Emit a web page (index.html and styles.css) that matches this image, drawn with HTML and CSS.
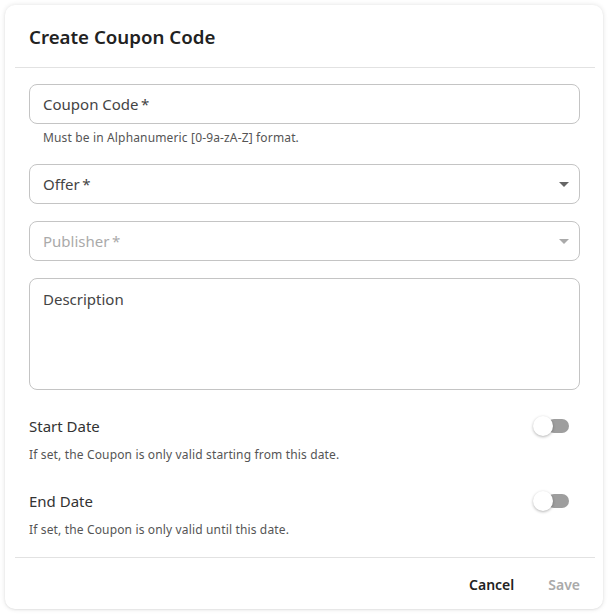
FILE: index.html
```html
<!DOCTYPE html>
<html>
<head>
<meta charset="utf-8">
<link rel="stylesheet" href="styles.css">
</head>
<body>
<div class="card">
  <div class="header"><h1 class="title">Create Coupon Code</h1></div>
  <div class="divider"></div>
  <div class="content">
    <div class="field"><span class="label">Coupon Code&thinsp;*</span></div>
    <div class="helper">Must be in Alphanumeric [0-9a-zA-Z] format.</div>
    <div class="field select"><span class="label">Offer&thinsp;*</span>
      <svg class="arrow" width="10" height="5" viewBox="0 0 10 5"><path d="M0 0h10L5 5z" fill="#666"/></svg>
    </div>
    <div class="field select disabled"><span class="label">Publisher&thinsp;*</span>
      <svg class="arrow" width="10" height="5" viewBox="0 0 10 5"><path d="M0 0h10L5 5z" fill="#aaa"/></svg>
    </div>
    <div class="field textarea"><span class="label">Description</span></div>
    <div class="toggle-row">
      <div class="toggle-head"><span class="toggle-label">Start Date</span><span class="switch"><span class="thumb"></span></span></div>
      <div class="toggle-help">If set, the Coupon is only valid starting from this date.</div>
    </div>
    <div class="toggle-row">
      <div class="toggle-head"><span class="toggle-label">End Date</span><span class="switch"><span class="thumb"></span></span></div>
      <div class="toggle-help">If set, the Coupon is only valid until this date.</div>
    </div>
  </div>
  <div class="divider"></div>
  <div class="footer">
    <button class="btn">Cancel</button>
    <button class="btn disabled">Save</button>
  </div>
</div>
</body>
</html>
```
FILE: styles.css
```css
* { box-sizing: border-box; }
html, body { margin: 0; padding: 0; background: #fff; }
body { font-family: "Noto Sans", "Open Sans", sans-serif; color: #333; }
.card {
  margin: 5px 6px 6px 5px;
  width: 598px;
  height: 604px;
  background: #fff;
  border-radius: 10px;
  box-shadow: 0 0 5px rgba(0,0,0,0.12), 0 1px 2px rgba(0,0,0,0.06);
  display: flex;
  flex-direction: column;
}
.header { height: 62px; padding: 0 24px; display: flex; align-items: center; }
.title { margin: 0; font-size: 18.7px; font-weight: 600; color: #222; }
.divider { height: 1px; background: #e2e2e2; margin: 0 8px 0 10px; }
.content { padding: 16px 23px 0 24px; flex: 1; }
.field {
  height: 40px;
  border: 1px solid #c4c4c4;
  border-radius: 8px;
  display: flex;
  align-items: center;
  padding: 0 13px;
}
.label { font-size: 15px; color: #444; }
.select { margin-top: 17px; justify-content: space-between; padding-right: 10px; }
.helper + .select { margin-top: 18px; }
.disabled .label { color: #aaa; }
.textarea { height: 112px; align-items: flex-start; padding-top: 10px; margin-top: 17px; }
.helper { font-size: 12px; letter-spacing: 0.15px; color: #555; padding: 6px 0 0 14px; height: 22px; line-height: 15px; }
.toggle-row { padding-top: 26px; }
.toggle-row + .toggle-row { padding-top: 29px; }
.toggle-head { display: flex; justify-content: space-between; align-items: center; height: 20px; }
.toggle-label { font-size: 15px; color: #333; }
.toggle-help { font-size: 12px; letter-spacing: 0.15px; color: #555; margin-top: 11px; line-height: 15px; }
.switch { width: 36px; height: 20px; position: relative; margin-right: 11px; }
.switch::before {
  content: ""; position: absolute; left: 14px; top: 3px; width: 22px; height: 14px;
  background: #9e9e9e; border-radius: 7px;
}
.thumb {
  position: absolute; left: 0; top: 0; width: 20px; height: 20px; border-radius: 50%;
  background: #fff; box-shadow: 0 1px 3px rgba(0,0,0,0.3);
}
.footer { height: 51px; display: flex; justify-content: flex-end; align-items: center; padding: 2px 15px 0 0; gap: 18px; }
.btn {
  border: none; background: none; font-family: "Noto Sans", sans-serif;
  font-size: 14px; font-weight: 600; color: #222; padding: 6px 8px;
}
.btn.disabled { color: #aaa; }
```
